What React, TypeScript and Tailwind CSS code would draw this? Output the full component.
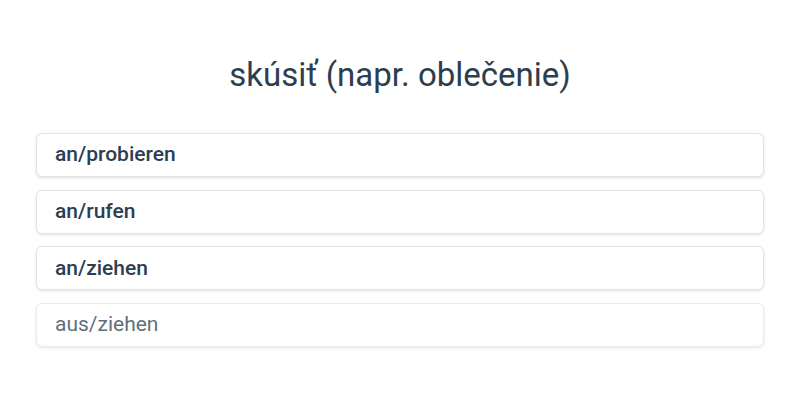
export default function App() {
  const items = ["an/probieren", "an/rufen", "an/ziehen"];
  return (
    <div className="w-[800px] h-[400px] bg-white px-[36px] pt-[54px]" style={{ fontFamily: "Roboto, sans-serif" }}>
      <h1 className="text-center text-[33px] leading-[42px] text-[#2c3e50] font-normal">skúsiť (napr. oblečenie)</h1>
      <div className="mt-[37px] flex flex-col gap-[12.7px]">
        {items.map((t) => (
          <div key={t} className="h-[44px] flex items-center px-[18px] rounded-[6px] border border-[#e3e3e3] bg-white shadow-[0_1px_3px_rgba(0,0,0,0.12)] text-[21px] font-medium text-[#2c3e50]">
            {t}
          </div>
        ))}
        <div className="h-[44px] flex items-center px-[18px] rounded-[6px] border border-[#e3e3e3] bg-white shadow-[0_1px_3px_rgba(0,0,0,0.12)] text-[21px] font-normal text-[#2c3e50] opacity-75">
          aus/ziehen
        </div>
      </div>
    </div>
  );
}
